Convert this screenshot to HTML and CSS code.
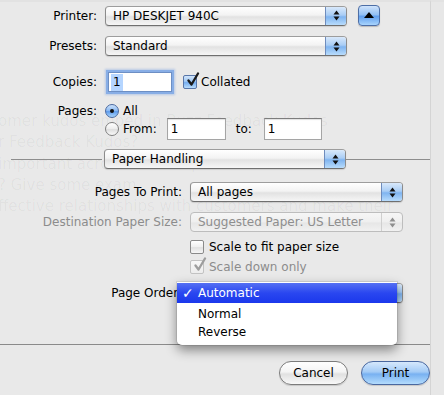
FILE: index.html
```html
<!DOCTYPE html>
<html lang="en">
<head>
    <meta charset="UTF-8">
    <meta name="viewport" content="width=device-width, initial-scale=1.0">
    <title>Print</title>
    <link rel="stylesheet" href="styles.css">
</head>
<body>
<div class="window">
  <main class="sheet">
    <div class="ghost">
      <p>omer kudos embed in Buzz Feedback Kudos</p>
      <p>r Feedback Kudos?</p>
      <p>important across the comp</p>
      <p>? Give some exam</p>
      <p>ffective relationships with customers and make their</p>
    </div>

    <div class="row r-printer">
      <span class="lbl">Printer:</span>
      <div class="popup w-main"><span class="val">HP DESKJET 940C</span><span class="arrows"><svg viewBox="0 0 7 11" width="7" height="11"><polygon points="0.5,4.5 3.5,0.5 6.5,4.5"/><polygon points="0.5,6.5 3.5,10.5 6.5,6.5"/></svg></span></div>
      <button class="disclose"><svg viewBox="0 0 10 6" width="10" height="6"><polygon points="0,6 5,0 10,6"/></svg></button>
    </div>

    <div class="row r-presets">
      <span class="lbl">Presets:</span>
      <div class="popup w-main"><span class="val">Standard</span><span class="arrows"><svg viewBox="0 0 7 11" width="7" height="11"><polygon points="0.5,4.5 3.5,0.5 6.5,4.5"/><polygon points="0.5,6.5 3.5,10.5 6.5,6.5"/></svg></span></div>
    </div>

    <div class="row r-copies">
      <span class="lbl">Copies:</span>
      <div class="field copies focus"><span class="sel">1</span></div>
      <span class="check on"><svg viewBox="0 0 16 16" width="16" height="16"><path d="M3.5 8.5 L6.5 12.5 L13 1.5" /></svg></span>
      <span class="opt">Collated</span>
    </div>

    <div class="row r-pages">
      <span class="lbl">Pages:</span>
      <span class="radio on"></span>
      <span class="opt">All</span>
    </div>

    <div class="row r-from">
      <span class="lbl"></span>
      <span class="radio"></span>
      <span class="opt">From:</span>
      <div class="field from">1</div>
      <span class="to">to:</span>
      <div class="field till">1</div>
    </div>

    <div class="row r-panel">
      <span class="line left"></span>
      <div class="popup w-main"><span class="val">Paper Handling</span><span class="arrows"><svg viewBox="0 0 7 11" width="7" height="11"><polygon points="0.5,4.5 3.5,0.5 6.5,4.5"/><polygon points="0.5,6.5 3.5,10.5 6.5,6.5"/></svg></span></div>
      <span class="line right"></span>
    </div>

    <div class="row r-topp">
      <span class="lbl wide">Pages To Print:</span>
      <div class="popup w-side"><span class="val">All pages</span><span class="arrows"><svg viewBox="0 0 7 11" width="7" height="11"><polygon points="0.5,4.5 3.5,0.5 6.5,4.5"/><polygon points="0.5,6.5 3.5,10.5 6.5,6.5"/></svg></span></div>
    </div>

    <div class="row r-dest">
      <span class="lbl wide dim">Destination Paper Size:</span>
      <div class="popup w-side off"><span class="val">Suggested Paper: US Letter</span><span class="arrows"><svg viewBox="0 0 7 11" width="7" height="11"><polygon points="0.5,4.5 3.5,0.5 6.5,4.5"/><polygon points="0.5,6.5 3.5,10.5 6.5,6.5"/></svg></span></div>
    </div>

    <div class="row r-fit">
      <span class="check"></span>
      <span class="opt">Scale to fit paper size</span>
    </div>

    <div class="row r-down">
      <span class="check off"><svg viewBox="0 0 16 16" width="16" height="16"><path d="M3.5 8.5 L6.5 12.5 L13 1.5" /></svg></span>
      <span class="opt dim">Scale down only</span>
    </div>

    <div class="row r-order">
      <span class="lbl wide">Page Order:</span>
      <div class="popup w-side"><span class="val">Automatic</span><span class="arrows"><svg viewBox="0 0 7 11" width="7" height="11"><polygon points="0.5,4.5 3.5,0.5 6.5,4.5"/><polygon points="0.5,6.5 3.5,10.5 6.5,6.5"/></svg></span></div>
    </div>

    <hr class="rule">

    <div class="row r-buttons">
      <button class="btn">Cancel</button>
      <button class="btn default">Print</button>
    </div>

    <ul class="menu">
      <li class="hl"><span class="tick">✓</span>Automatic</li>
      <li>Normal</li>
      <li>Reverse</li>
    </ul>
  </main>
  <div class="strip"></div>
</div>
</body>
</html>
```

FILE: styles.css
```css
body {
  margin: 0;
  background: #e6e6e6;
  font-family: "DejaVu Sans", Verdana, sans-serif;
  font-size: 12px;
  color: #000;
}

.window {
  display: flex;
  height: 395px;
  overflow: hidden;
}

.sheet {
  position: relative;
  z-index: 0;
  width: 431px;
  height: 395px;
  box-sizing: border-box;
  padding-top: 3px;
  background: #e9e9e9;
  border-top: 2px solid #e2e2e2;
  border-right: 1px solid #d4d4d4;
}

.strip {
  flex: 1;
  background: #e7e7e7;
  border-top: 2px solid #e2e2e2;
}

/* faint text of the window behind the sheet */
.ghost {
  position: absolute;
  z-index: -1;
  left: -2px;
  top: 109px;
  font-size: 15px;
  line-height: 21.3px;
  color: rgba(0, 0, 0, 0.045);
  white-space: nowrap;
}

.ghost p {
  margin: 0;
}

.row {
  display: flex;
  align-items: center;
}

.lbl {
  flex: none;
  width: 97px;
  margin-right: 8px;
  text-align: right;
  white-space: nowrap;
}

.lbl.wide {
  width: 182px;
}

.dim {
  color: #8c8c8c;
}

/* popup buttons */
.popup {
  flex: none;
  display: flex;
  height: 20px;
  box-sizing: border-box;
  border: 1px solid #8b8b8b;
  border-top-color: #9d9d9d;
  border-bottom-color: #6f6f6f;
  border-radius: 4px;
  background: linear-gradient(#ffffff, #f3f3f3 45%, #e2e2e2 55%, #f6f6f6);
  box-shadow: 0 1px 1px rgba(0, 0, 0, 0.12);
  overflow: hidden;
}

.popup .val {
  flex: 1;
  padding-left: 7px;
  line-height: 18px;
  white-space: nowrap;
}

.popup .arrows {
  display: flex;
  align-items: center;
  justify-content: center;
  width: 20px;
  border-left: 1px solid #6e8cbd;
  background: linear-gradient(#d9e9fb, #a9cdf5 45%, #7fb4f0 55%, #b8dcfc);
}

.popup .arrows svg {
  fill: #111;
}

.popup.off {
  border-color: #bdbdbd;
  box-shadow: none;
  background: linear-gradient(#f6f6f6, #efefef 50%, #e6e6e6 55%, #f1f1f1);
  color: #8e8e8e;
}

.popup.off .arrows {
  border-left-color: #cfcfcf;
  background: transparent;
}

.popup.off .arrows svg {
  fill: #8e8e8e;
}

.w-main {
  width: 242px;
}

.w-side {
  width: 213px;
}

.disclose {
  width: 22px;
  height: 21px;
  margin-left: 11px;
  padding: 0;
  display: flex;
  align-items: center;
  justify-content: center;
  border: 1px solid #4d6ea6;
  border-radius: 4px;
  background: linear-gradient(#cfe3fb, #93c0f4 45%, #62a0ee 55%, #a8d4fd);
  box-shadow: 0 1px 1px rgba(0, 0, 0, 0.2);
}

.disclose svg {
  fill: #000;
  margin-top: -1px;
}

/* text fields */
.field {
  flex: none;
  height: 22px;
  box-sizing: border-box;
  padding-left: 3px;
  line-height: 21px;
  background: #fff;
  border: 1px solid #a5a5a5;
  border-top-color: #7d7d7d;
  box-shadow: inset 0 1px 1px rgba(0, 0, 0, 0.12);
}

.field.copies {
  width: 64px;
  height: 20px;
  line-height: 19px;
  margin-left: 3px;
  padding-left: 2px;
}

.field.focus {
  border-color: #6d8fc4;
  box-shadow: 0 0 0 2px #88aee6, 0 0 2px 3px rgba(90, 140, 220, 0.35);
}

.sel {
  display: inline-block;
  padding: 0 2px;
  background: #b5d5ff;
  line-height: 17px;
}

.field.from {
  width: 59px;
  margin-left: 10px;
}

.field.till {
  width: 58px;
}

.to {
  width: 28px;
  margin-left: 10px;
}

/* checkboxes and radios */
.check {
  position: relative;
  flex: none;
  width: 14px;
  height: 14px;
  box-sizing: border-box;
  border: 1px solid #8a8a8a;
  border-radius: 2px;
  background: linear-gradient(#ffffff, #efefef 50%, #e0e0e0 55%, #f7f7f7);
}

.check svg {
  position: absolute;
  left: 1px;
  top: -4px;
  fill: none;
  stroke: #1a1a1a;
  stroke-width: 2.3;
  stroke-linecap: round;
  stroke-linejoin: round;
}

.check.on {
  border-color: #5876a8;
  background: linear-gradient(#d2e5fb, #9ec7f4 45%, #76aef0 55%, #b8dcfc);
}

.check.off {
  border-color: #c2c2c2;
  background: linear-gradient(#f7f7f7, #ededed);
}

.check.off svg {
  stroke: #9d9d9d;
}

.radio {
  flex: none;
  position: relative;
  width: 14px;
  height: 14px;
  box-sizing: border-box;
  border: 1px solid #7f7f7f;
  border-radius: 50%;
  background: linear-gradient(#ffffff, #ececec 50%, #dedede 55%, #f9f9f9);
}

.radio.on {
  border-color: #4b6aa0;
  background: linear-gradient(#cde2fb, #8fbcf3 45%, #5f9cec 55%, #a9d5fd);
}

.radio.on::after {
  content: "";
  position: absolute;
  left: 4px;
  top: 4px;
  width: 4px;
  height: 4px;
  border-radius: 50%;
  background: #111;
}

.opt {
  margin-left: 4px;
  white-space: nowrap;
}

/* rows, top to bottom */
.r-printer {
  height: 21px;
}

.r-presets {
  height: 20px;
  margin-top: 10px;
}

.r-copies {
  height: 24px;
  margin-top: 14px;
}

.r-copies .check {
  margin-left: 11px;
}

.r-pages {
  height: 15px;
  margin-top: 9px;
}

.r-from {
  height: 22px;
  margin-top: 0;
}

.r-panel {
  height: 20px;
  margin-top: 9px;
}

.line {
  height: 1px;
  background: #8d8d8d;
}

.line.left {
  width: 91px;
  margin-left: 11px;
  margin-right: 2px;
}

.line.right {
  flex: 1;
}

.r-topp {
  height: 20px;
  margin-top: 13px;
}

.r-dest {
  height: 20px;
  margin-top: 10px;
}

.r-fit {
  height: 16px;
  margin-top: 7px;
  padding-left: 190px;
}

.r-fit .opt,
.r-down .opt {
  margin-left: 5px;
}

.r-down {
  height: 16px;
  margin-top: 4px;
  padding-left: 190px;
}

.r-order {
  height: 20px;
  margin-top: 8px;
}

.rule {
  margin: 41px 0 0;
  border: 0;
  height: 1px;
  background: #8a8a8a;
}

.r-buttons {
  justify-content: flex-end;
  gap: 13px;
  margin-top: 16px;
}

.btn {
  width: 69px;
  height: 24px;
  padding: 0;
  font-family: inherit;
  font-size: 12px;
  color: #000;
  border: 1px solid #7c7c7c;
  border-radius: 12px;
  background: linear-gradient(#ffffff, #f4f4f4 45%, #e1e1e1 55%, #f8f8f8);
  box-shadow: 0 1px 1px rgba(0, 0, 0, 0.15);
}

.btn.default {
  border-color: #4a68a0;
  background: linear-gradient(#d6e8fc, #a3cbf6 45%, #78b1f1 55%, #b4dcfd);
}

/* open menu of the Page Order popup */
.menu {
  position: absolute;
  left: 177px;
  top: 280px;
  width: 220px;
  margin: 0;
  padding: 1px 0 4px;
  list-style: none;
  box-sizing: border-box;
  background: rgba(255, 255, 255, 0.98);
  border-radius: 0 0 5px 5px;
  box-shadow: 0 5px 12px rgba(0, 0, 0, 0.45), 0 0 0 1px rgba(0, 0, 0, 0.08);
}

.menu li {
  position: relative;
  height: 18px;
  line-height: 18px;
  padding-left: 21px;
}

.menu li.hl {
  height: 20px;
  line-height: 20px;
  margin-bottom: 2px;
  color: #fff;
  background: linear-gradient(#5570f3, #2a47f0 50%, #1b38ec);
}

.menu .tick {
  position: absolute;
  left: 5px;
  font-size: 14px;
  font-weight: bold;
}
```
